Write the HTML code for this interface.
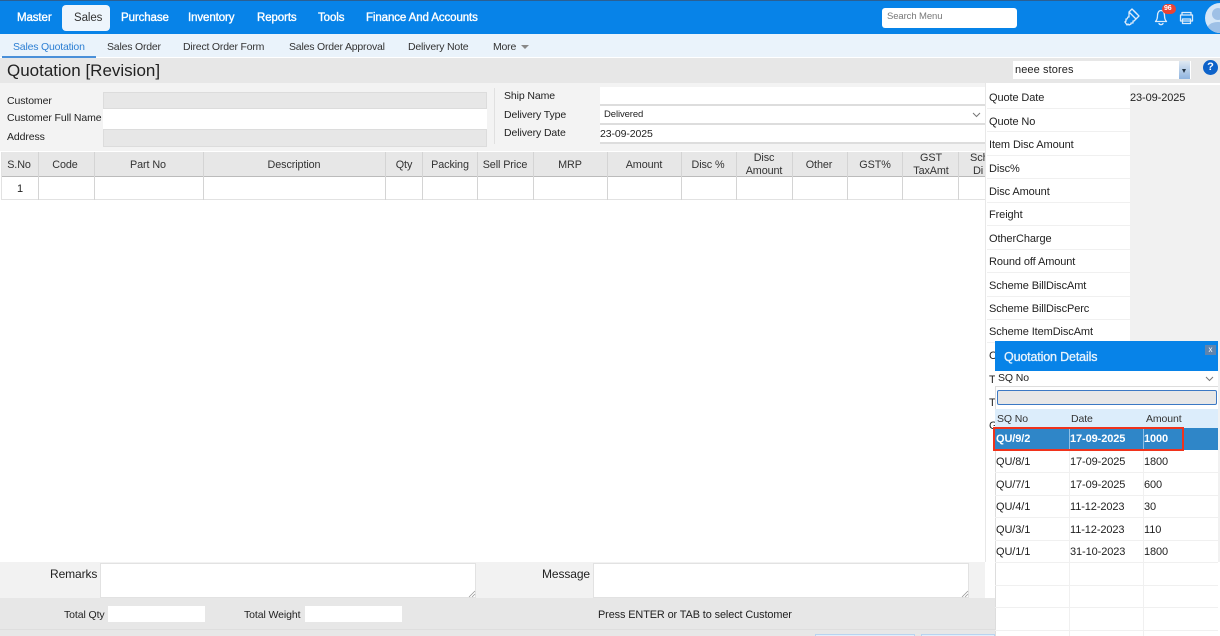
<!DOCTYPE html>
<html><head><meta charset="utf-8">
<style>
html,body{margin:0;padding:0;width:1220px;height:636px;overflow:hidden;background:#fff}
body{position:relative;font-family:"Liberation Sans",sans-serif;font-size:11px;color:#222}
.a{position:absolute;box-sizing:border-box}
.t{position:absolute;white-space:nowrap;line-height:14px;letter-spacing:-.1px}
.c{transform:translateX(-50%);text-align:center}
.nav{color:#fff;font-size:11.5px;top:11px;letter-spacing:-.1px;-webkit-text-stroke:.35px #fff}
.sub{font-size:10.5px;top:40px;color:#333;letter-spacing:-.2px}
.th{top:158px;color:#333;font-size:10.8px}
.thl{line-height:13px}
.r{font-size:11px;color:#222}
.f{font-size:10.5px}
.v{position:absolute;width:1px;background:#d4d4d4}
</style></head><body>
<!-- top bar -->
<div class="a" style="left:0;top:0;width:1220px;height:34px;background:#0783e8"></div>
<div class="a" style="left:0;top:0;width:1220px;height:1px;background:#2a5f93"></div>
<div class="a" style="left:62px;top:5px;width:48px;height:26px;background:#eef5fc;border-radius:4px"></div>
<span class="t nav" style="left:17px">Master</span>
<span class="t nav" style="left:74px;color:#333;-webkit-text-stroke:0">Sales</span>
<span class="t nav" style="left:121px">Purchase</span>
<span class="t nav" style="left:188px">Inventory</span>
<span class="t nav" style="left:257px">Reports</span>
<span class="t nav" style="left:318px">Tools</span>
<span class="t nav" style="left:366px">Finance And Accounts</span>
<div class="a" style="left:882px;top:8px;width:135px;height:20px;background:#fff;border-radius:3px"></div>
<span class="t" style="left:887px;top:10px;font-size:9.5px;color:#777">Search Menu</span>
<svg class="a" style="left:1120px;top:6px" width="100" height="28" viewBox="0 0 100 28" fill="none" stroke="#dcebfa" stroke-width="1.3" stroke-linejoin="round" stroke-linecap="round">
<path d="M12 3l7 7-3 3-7-7zM9 6l7 7-2 2-1 0 0 2-2 0 0 1-2 1-1-1-1 1-2-3 1-1 0-2 1 0 1-2 1 0 0-2z"/>
<path d="M14 5l3 3M6 15l-1 1"/>
<path d="M35.5 15.5c1.5-1.5 2-3 2-6 0-3 1.5-5 3.5-5s3.5 2 3.5 5c0 3 .5 4.5 2 6zM39 17.5c.5 1.5 3.5 1.5 4 0"/>
<path d="M62 9V6.5h9V9M60.5 9h12v6h-12zM62.5 13h8v4.5h-8z"/>
</svg>
<div class="a" style="left:1162px;top:4px;width:14px;height:10px;border-radius:5px;background:#ea4335"></div>
<span class="t" style="left:1164px;top:2px;font-size:7px;color:#fff;font-weight:bold">96</span>
<div class="a" style="left:1205px;top:3px;width:30px;height:30px;border-radius:50%;background:#d5e6f7;overflow:hidden"><div class="a" style="left:7px;top:5px;width:12px;height:12px;border-radius:50%;background:#9ec0e6"></div><div class="a" style="left:2px;top:19px;width:22px;height:14px;border-radius:50%;background:#9ec0e6"></div></div>
<!-- sub nav -->
<div class="a" style="left:0;top:34px;width:1220px;height:23px;background:#eaf3fb"></div>
<div class="a" style="left:2px;top:56px;width:94px;height:2px;background:#4a90d9"></div>
<span class="t sub" style="left:13px;color:#2d7fd3">Sales Quotation</span>
<span class="t sub" style="left:107px">Sales Order</span>
<span class="t sub" style="left:183px">Direct Order Form</span>
<span class="t sub" style="left:289px">Sales Order Approval</span>
<span class="t sub" style="left:408px">Delivery Note</span>
<span class="t sub" style="left:493px">More</span>
<div class="a" style="left:521px;top:45px;border:4px solid transparent;border-top:4px solid #888;border-bottom:0"></div>
<!-- title -->
<div class="a" style="left:0;top:58px;width:1220px;height:25px;background:#e7e7e7"></div>
<span class="t" style="left:7px;top:60px;font-size:17px;line-height:22px;color:#222;letter-spacing:0">Quotation [Revision]</span>
<div class="a" style="left:1013px;top:61px;width:178px;height:18px;background:#fff"></div>
<span class="t" style="left:1015px;top:63px;font-size:11px;color:#222;letter-spacing:.1px">neee stores</span>
<div class="a" style="left:1179px;top:61px;width:11px;height:18px;background:linear-gradient(#dfe8f2,#8fb4e0)"></div>
<div class="a" style="left:1182px;top:69px;border:2.5px solid transparent;border-top:4px solid #234;border-bottom:0"></div>
<div class="a" style="left:1203px;top:60px;width:15px;height:15px;border-radius:50%;background:#0d62c9;color:#fff;font-weight:bold;font-size:11px;line-height:15px;text-align:center">?</div>
<!-- form -->
<div class="a" style="left:0;top:83px;width:985px;height:68px;background:#f3f3f3"></div>
<div class="a" style="left:103px;top:92px;width:384px;height:17px;background:#e7e7e7;border:1px solid #dcdcdc"></div>
<div class="a" style="left:103px;top:109px;width:384px;height:20px;background:#fff"></div>
<div class="a" style="left:103px;top:129px;width:384px;height:18px;background:#e7e7e7;border:1px solid #dcdcdc"></div>
<div class="a" style="left:494px;top:88px;width:1px;height:56px;background:#e0e0e0"></div>
<span class="t f" style="left:7px;top:94px">Customer</span>
<span class="t f" style="left:7px;top:111px">Customer Full Name</span>
<span class="t f" style="left:7px;top:130px">Address</span>
<span class="t f" style="left:504px;top:89px">Ship Name</span>
<span class="t f" style="left:504px;top:108px">Delivery Type</span>
<span class="t f" style="left:504px;top:126px">Delivery Date</span>
<div class="a" style="left:600px;top:87px;width:385px;height:19px;background:#fff;border-bottom:2px solid #ddd"></div>
<div class="a" style="left:600px;top:106px;width:385px;height:19px;background:#fff;border-bottom:2px solid #ddd"></div>
<div class="a" style="left:600px;top:125px;width:385px;height:19px;background:#fff;border-bottom:2px solid #ddd"></div>
<span class="t" style="left:604px;top:108px;font-size:9.5px">Delivered</span>
<span class="t" style="left:600px;top:127px;font-size:10.5px">23-09-2025</span>
<svg class="a" style="left:972px;top:112px" width="9" height="6" fill="none" stroke="#777"><path d="M1 1l3.5 3.5L8 1"/></svg>
<!-- table -->
<div class="a" style="left:1px;top:152px;width:984px;height:25px;background:#e7e7e7;border-bottom:1px solid #bbb"></div>
<div class="a" style="left:1px;top:177px;width:984px;height:23px;background:#fff;border-bottom:1px solid #e2e2e2"></div>
<div class="v" style="left:1px;top:152px;height:48px;background:#e2e2e2"></div>
<div class="v" style="left:38px;top:152px;height:48px"></div>
<div class="v" style="left:94px;top:152px;height:48px"></div>
<div class="v" style="left:203px;top:152px;height:48px"></div>
<div class="v" style="left:385px;top:152px;height:48px"></div>
<div class="v" style="left:422px;top:152px;height:48px"></div>
<div class="v" style="left:477px;top:152px;height:48px"></div>
<div class="v" style="left:533px;top:152px;height:48px"></div>
<div class="v" style="left:607px;top:152px;height:48px"></div>
<div class="v" style="left:681px;top:152px;height:48px"></div>
<div class="v" style="left:736px;top:152px;height:48px"></div>
<div class="v" style="left:792px;top:152px;height:48px"></div>
<div class="v" style="left:847px;top:152px;height:48px"></div>
<div class="v" style="left:902px;top:152px;height:48px"></div>
<div class="v" style="left:958px;top:152px;height:48px"></div>
<span class="t c th" style="left:19px">S.No</span>
<span class="t c th" style="left:65px">Code</span>
<span class="t c th" style="left:148px">Part No</span>
<span class="t c th" style="left:294px">Description</span>
<span class="t c th" style="left:404px">Qty</span>
<span class="t c th" style="left:450px">Packing</span>
<span class="t c th" style="left:505px">Sell Price</span>
<span class="t c th" style="left:570px">MRP</span>
<span class="t c th" style="left:644px">Amount</span>
<span class="t c th" style="left:708px">Disc %</span>
<span class="t c th thl" style="left:764px;top:152px">Disc<br>Amount</span>
<span class="t c th" style="left:819px">Other</span>
<span class="t c th" style="left:875px">GST%</span>
<span class="t c th thl" style="left:931px;top:152px">GST<br>TaxAmt</span>
<div class="a" style="left:959px;top:152px;width:26px;height:25px;overflow:hidden"><span class="t thl" style="left:11px;top:0;color:#333;width:30px;text-align:left">Sch<br>&nbsp;Di</span></div>
<span class="t" style="left:17px;top:182px">1</span>
<!-- right panel -->
<div class="a" style="left:985px;top:83px;width:235px;height:479px;background:#fff;border-left:1px solid #e8e8e8"></div>
<div class="a" style="left:1130px;top:85px;width:90px;height:477px;background:#f1f1f1"></div>
<div class="a" style="left:987px;top:108px;width:143px;height:1px;background:#f0f0f0"></div>
<div class="a" style="left:987px;top:131px;width:143px;height:1px;background:#f0f0f0"></div>
<div class="a" style="left:987px;top:155px;width:143px;height:1px;background:#f0f0f0"></div>
<div class="a" style="left:987px;top:178px;width:143px;height:1px;background:#f0f0f0"></div>
<div class="a" style="left:987px;top:202px;width:143px;height:1px;background:#f0f0f0"></div>
<div class="a" style="left:987px;top:225px;width:143px;height:1px;background:#f0f0f0"></div>
<div class="a" style="left:987px;top:249px;width:143px;height:1px;background:#f0f0f0"></div>
<div class="a" style="left:987px;top:272px;width:143px;height:1px;background:#f0f0f0"></div>
<div class="a" style="left:987px;top:296px;width:143px;height:1px;background:#f0f0f0"></div>
<div class="a" style="left:987px;top:319px;width:143px;height:1px;background:#f0f0f0"></div>
<div class="a" style="left:987px;top:342px;width:143px;height:1px;background:#f0f0f0"></div>
<span class="t r" style="left:989px;top:91px">Quote Date</span>
<span class="t r" style="left:1130px;top:91px">23-09-2025</span>
<span class="t r" style="left:989px;top:115px">Quote No</span>
<span class="t r" style="left:989px;top:138px">Item Disc Amount</span>
<span class="t r" style="left:989px;top:162px">Disc%</span>
<span class="t r" style="left:989px;top:185px">Disc Amount</span>
<span class="t r" style="left:989px;top:208px">Freight</span>
<span class="t r" style="left:989px;top:232px">OtherCharge</span>
<span class="t r" style="left:989px;top:255px">Round off Amount</span>
<span class="t r" style="left:989px;top:279px">Scheme BillDiscAmt</span>
<span class="t r" style="left:989px;top:302px">Scheme BillDiscPerc</span>
<span class="t r" style="left:989px;top:325px">Scheme ItemDiscAmt</span>
<span class="t r" style="left:989px;top:349px">C</span>
<span class="t r" style="left:989px;top:373px">T</span>
<span class="t r" style="left:989px;top:396px">T</span>
<span class="t r" style="left:989px;top:419px">G</span>
<!-- bottom -->
<div class="a" style="left:0;top:562px;width:985px;height:36px;background:#f2f2f2"></div>
<div class="a" style="left:100px;top:563px;width:376px;height:35px;background:#fff;border:1px solid #e2e2e2"></div>
<div class="a" style="left:593px;top:563px;width:376px;height:35px;background:#fff;border:1px solid #e2e2e2"></div>
<svg class="a" style="left:468px;top:590px" width="8" height="8" fill="none" stroke="#999" stroke-width=".8"><path d="M1 7l6-6M4 7l3-3"/></svg>
<svg class="a" style="left:961px;top:590px" width="8" height="8" fill="none" stroke="#999" stroke-width=".8"><path d="M1 7l6-6M4 7l3-3"/></svg>
<span class="t" style="left:50px;top:567px;font-size:12px">Remarks</span>
<span class="t" style="left:542px;top:567px;font-size:12px">Message</span>
<div class="a" style="left:0;top:598px;width:996px;height:38px;background:#e7e7e7"></div>
<div class="a" style="left:0;top:629px;width:996px;height:1px;background:#dedede"></div>
<div class="a" style="left:108px;top:606px;width:97px;height:16px;background:#fff"></div>
<div class="a" style="left:305px;top:606px;width:97px;height:16px;background:#fff"></div>
<span class="t f" style="left:64px;top:608px">Total Qty</span>
<span class="t f" style="left:244px;top:608px">Total Weight</span>
<span class="t" style="left:598px;top:608px;font-size:10.9px">Press ENTER or TAB to select Customer</span>
<div class="a" style="left:815px;top:634px;width:100px;height:4px;background:#e3effb;border:1px solid #b8d4f0"></div>
<div class="a" style="left:921px;top:634px;width:74px;height:4px;background:#e3effb;border:1px solid #b8d4f0"></div>
<!-- dialog -->
<div class="a" style="left:995px;top:341px;width:223px;height:295px;background:#fff;border-left:1px solid #ddd"></div>
<div class="a" style="left:995px;top:341px;width:223px;height:30px;background:#0783e8"></div>
<span class="t" style="left:1004px;top:350px;font-size:12.5px;color:#e8f3fd;letter-spacing:-.15px;-webkit-text-stroke:.3px #e8f3fd">Quotation Details</span>
<div class="a" style="left:1205px;top:345px;width:11px;height:10px;background:#5f84ad;color:#fff;font-size:8px;line-height:9px;text-align:center">x</div>
<div class="a" style="left:995px;top:371px;width:223px;height:16px;background:#fff;border-bottom:1px solid #ddd"></div>
<span class="t" style="left:998px;top:371px;font-size:10.5px">SQ No</span>
<svg class="a" style="left:1205px;top:376px" width="9" height="6" fill="none" stroke="#777"><path d="M1 1l3.5 3.5L8 1"/></svg>
<div class="a" style="left:997px;top:390px;width:220px;height:15px;background:#e7e7e7;border:1px solid #3b78c4;border-radius:2px"></div>
<div class="a" style="left:995px;top:409px;width:223px;height:19px;background:#dcedfb"></div>
<span class="t" style="left:997px;top:412px;font-size:10.5px;color:#333">SQ No</span>
<span class="t" style="left:1071px;top:412px;font-size:10.5px;color:#333">Date</span>
<span class="t" style="left:1146px;top:412px;font-size:10.5px;color:#333">Amount</span>
<div class="a" style="left:995px;top:428px;width:223px;height:22px;background:#2f86c8"></div>
<div class="v" style="left:1069px;top:428px;height:208px;background:#f0f0f0"></div>
<div class="v" style="left:1143px;top:428px;height:208px;background:#f0f0f0"></div>
<div class="v" style="left:1069px;top:428px;height:22px;background:#8fc0e6"></div>
<div class="v" style="left:1143px;top:428px;height:22px;background:#8fc0e6"></div>
<div class="a" style="left:995px;top:472px;width:223px;height:1px;background:#f0f0f0"></div>
<div class="a" style="left:995px;top:495px;width:223px;height:1px;background:#f0f0f0"></div>
<div class="a" style="left:995px;top:517px;width:223px;height:1px;background:#f0f0f0"></div>
<div class="a" style="left:995px;top:540px;width:223px;height:1px;background:#f0f0f0"></div>
<div class="a" style="left:995px;top:562px;width:223px;height:1px;background:#f0f0f0"></div>
<div class="a" style="left:995px;top:585px;width:223px;height:1px;background:#f0f0f0"></div>
<div class="a" style="left:995px;top:607px;width:223px;height:1px;background:#f0f0f0"></div>
<div class="a" style="left:995px;top:630px;width:223px;height:1px;background:#f0f0f0"></div>
<span class="t" style="left:996px;top:432px;color:#fff;font-weight:bold">QU/9/2</span>
<span class="t" style="left:1070px;top:432px;color:#fff;font-weight:bold">17-09-2025</span>
<span class="t" style="left:1144px;top:432px;color:#fff;font-weight:bold">1000</span>
<span class="t" style="left:996px;top:455px">QU/8/1</span><span class="t" style="left:1070px;top:455px">17-09-2025</span><span class="t" style="left:1144px;top:455px">1800</span>
<span class="t" style="left:996px;top:478px">QU/7/1</span><span class="t" style="left:1070px;top:478px">17-09-2025</span><span class="t" style="left:1144px;top:478px">600</span>
<span class="t" style="left:996px;top:500px">QU/4/1</span><span class="t" style="left:1070px;top:500px">11-12-2023</span><span class="t" style="left:1144px;top:500px">30</span>
<span class="t" style="left:996px;top:523px">QU/3/1</span><span class="t" style="left:1070px;top:523px">11-12-2023</span><span class="t" style="left:1144px;top:523px">110</span>
<span class="t" style="left:996px;top:545px">QU/1/1</span><span class="t" style="left:1070px;top:545px">31-10-2023</span><span class="t" style="left:1144px;top:545px">1800</span>
<div class="a" style="left:993px;top:427px;width:191px;height:24px;border:2px solid #f0331c"></div>
</body></html>
